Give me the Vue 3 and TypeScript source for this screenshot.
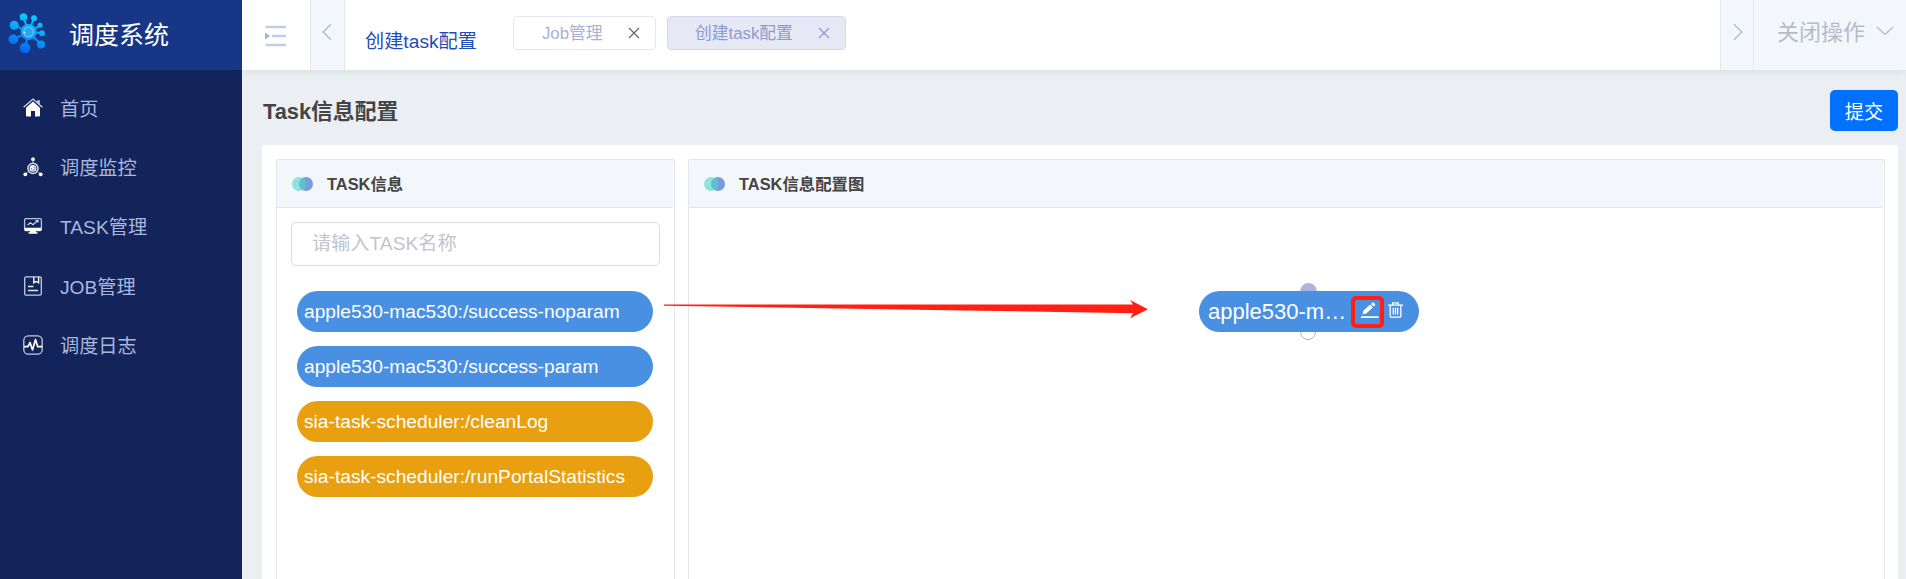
<script setup lang="ts">
interface MenuItem { icon: string; label: string }
interface Tab { label: string; active: boolean }
interface Task { name: string; kind: 'blue' | 'orange' }

const menu: MenuItem[] = [
  { icon: 'home', label: '首页' },
  { icon: 'monitor', label: '调度监控' },
  { icon: 'task', label: 'TASK管理' },
  { icon: 'job', label: 'JOB管理' },
  { icon: 'log', label: '调度日志' },
]
const tabs: Tab[] = [
  { label: 'Job管理', active: false },
  { label: '创建task配置', active: true },
]
const tasks: Task[] = [
  { name: 'apple530-mac530:/success-noparam', kind: 'blue' },
  { name: 'apple530-mac530:/success-param', kind: 'blue' },
  { name: 'sia-task-scheduler:/cleanLog', kind: 'orange' },
  { name: 'sia-task-scheduler:/runPortalStatistics', kind: 'orange' },
]
// Node captions keep only the first ten characters of the task name.
const nodeLabel = tasks[0].name.slice(0, 10) + '…'
</script>

<template>
  <div class="app">
    <aside class="sidebar">
      <div class="brand">
        <svg class="logo" width="38" height="42" viewBox="0 0 38 42">
          <defs>
            <linearGradient id="lg" gradientUnits="userSpaceOnUse" x1="26" y1="2" x2="12" y2="40">
              <stop offset="0" stop-color="#00d4ff" />
              <stop offset="0.45" stop-color="#0aa6fb" />
              <stop offset="1" stop-color="#0560f5" />
            </linearGradient>
          </defs>
          <g stroke="url(#lg)" stroke-width="1.9">
            <path d="M20.5 20 15.5 5M20.5 20 26 6M20.5 20 32.500 13.500M20.500 20 35 21M20.500 20 33 32.500M20.500 20 17 36M20.500 20 5 27.500M20.500 20 6 13" />
          </g>
          <g fill="url(#lg)">
            <circle cx="20.500" cy="20" r="8" />
            <circle cx="15.500" cy="5" r="3.800" />
            <circle cx="26" cy="6.200" r="2.900" />
            <circle cx="32" cy="13.200" r="2.500" />
            <circle cx="34" cy="21.200" r="3" />
            <circle cx="33" cy="32.500" r="4" />
            <circle cx="17" cy="36" r="5.300" />
            <circle cx="5.300" cy="27.400" r="4.800" />
            <circle cx="6.200" cy="13.200" r="4.500" />
          </g>
          <circle cx="20.500" cy="20" r="4.900" fill="#2ba6f5" stroke="#62c8fb" stroke-width="1.200" />
          <circle cx="16.300" cy="20.500" r="1" fill="#c8f0ff" />
        </svg>
        <span class="brand-name">调度系统</span>
      </div>
      <nav class="menu">
        <div v-for="m in menu" :key="m.icon" class="menu-item">
          <svg class="menu-icon" width="20" height="20" viewBox="0 0 20 20" fill="none">
            <template v-if="m.icon === 'home'">
              <path d="M.6 9.200 10 1l9.400 8.200" stroke="#d5daea" stroke-width="1.300" />
              <path d="M14.200 2.200h2.600v4.200l-2.600-2.300z" fill="#d5daea" />
              <path d="M3 9.700 10 3.600l7 6.100V17.500a1 1 0 0 1-1 1h-4V13H8v5.500H4a1 1 0 0 1-1-1z" fill="#fff" />
            </template>
            <template v-else-if="m.icon === 'monitor'">
              <path d="M10 2v5M8 13l-6 4M12 13l6 4" stroke="#8f9bc2" stroke-width="1" />
              <circle cx="10" cy="11.300" r="5.100" stroke="#d8dded" stroke-width="1.500" />
              <circle cx="10" cy="11.300" r="3.400" fill="#fff" />
              <path d="M8.300 10.800a1.900 1.900 0 1 0 2.200-1.400" stroke="#5c6a98" stroke-width=".9" />
              <circle cx="10" cy="2.200" r="2" fill="#e6e9f3" />
              <circle cx="2.300" cy="17.300" r="1.900" fill="#fff" />
              <circle cx="17.700" cy="17.300" r="1.900" fill="#fff" />
            </template>
            <template v-else-if="m.icon === 'task'">
              <rect x="1.600" y="2.600" width="16.800" height="12" rx="1.300" stroke="#b9c1da" stroke-width="1.300" />
              <path d="M1.600 11.800h16.800v1.700a1.500 1.500 0 0 1-1.500 1.500H3.100a1.500 1.500 0 0 1-1.500-1.500zM7 15h6v1.200h1.500v1.500h-9v-1.500H7z" fill="#fff" />
              <path d="m4.500 9 3-2.200 2.500 2 4.500-4M12.500 4.500h2.500v2" stroke="#d5daea" stroke-width="1.200" />
            </template>
            <template v-else-if="m.icon === 'job'">
              <rect x="1.700" y=".8" width="16.600" height="18.400" rx="1.500" stroke="#c5cce0" stroke-width="1.300" />
              <path d="M10.800 1v5.800l2.400-1.300 2.400 1.300V1" stroke="#fff" stroke-width="1.400" />
              <path d="M5 10.500h5.500M5 14.500h10" stroke="#e4e8f2" stroke-width="1.400" />
            </template>
            <template v-else>
              <rect x=".8" y=".8" width="18.400" height="18.400" rx="4.500" stroke="#c5cce0" stroke-width="1.300" />
              <path d="M1 11.700h4l2-4.200 2.500 7.500 3-10.500 2.200 7.200H19" stroke="#fff" stroke-width="1.700" stroke-linejoin="round" />
            </template>
          </svg>
          <span>{{ m.label }}</span>
        </div>
      </nav>
    </aside>

    <div class="main">
      <header class="topbar">
        <div class="fold">
          <svg width="22" height="22" viewBox="0 0 22 22">
            <path d="M.5 2h20.500M7 11h14M.5 20h20.500" stroke="#c3cce5" stroke-width="2.400" />
            <path d="M0 7.500 5 11l-5 3.500z" fill="#a3b0da" />
          </svg>
        </div>
        <div class="scroll-btn left">
          <svg width="10" height="18" viewBox="0 0 10 18"><path d="M9 1.200 1.200 9 9 16.800" fill="none" stroke="#b4bccb" stroke-width="1.500" /></svg>
        </div>
        <div class="crumb">创建task配置</div>
        <div class="tabs">
          <div v-for="t in tabs" :key="t.label" class="tab" :class="{ active: t.active }">
            <span>{{ t.label }}</span>
            <svg width="12" height="12" viewBox="0 0 12 12"><path d="m1 1 10 10M11 1 1 11" stroke="currentColor" stroke-width="1.200" /></svg>
          </div>
        </div>
        <div class="scroll-btn right">
          <svg width="10" height="18" viewBox="0 0 10 18"><path d="m1 1.200 7.800 7.800L1 16.800" fill="none" stroke="#b4bccb" stroke-width="1.500" /></svg>
        </div>
        <div class="close-op">
          <span>关闭操作</span>
          <svg width="18" height="10" viewBox="0 0 18 10"><path d="m1 1 8 7.500L17 1" fill="none" stroke="#b9c1d0" stroke-width="1.500" /></svg>
        </div>
      </header>

      <section class="content">
        <div class="title-row">
          <h1>Task信息配置</h1>
          <button class="submit">提交</button>
        </div>
        <div class="board">
          <div class="card list-card">
            <div class="card-head">
              <svg width="21" height="14" viewBox="0 0 21 14">
                <circle cx="14" cy="7" r="7" fill="#759edb" /><circle cx="7" cy="7" r="7" fill="#8fe3dc" />
                <path d="M10.500 .9a7 7 0 0 1 0 12.200a7 7 0 0 1 0-12.200z" fill="#5fc1cc" />
              </svg>
              <span>TASK信息</span>
            </div>
            <div class="list-body">
              <input class="search" type="text" placeholder="请输入TASK名称" />
              <div class="pills">
                <div v-for="t in tasks" :key="t.name" class="pill" :class="t.kind">{{ t.name }}</div>
              </div>
            </div>
          </div>
          <div class="card graph-card">
            <div class="card-head">
              <svg width="21" height="14" viewBox="0 0 21 14">
                <circle cx="14" cy="7" r="7" fill="#759edb" /><circle cx="7" cy="7" r="7" fill="#8fe3dc" />
                <path d="M10.500 .9a7 7 0 0 1 0 12.200a7 7 0 0 1 0-12.200z" fill="#5fc1cc" />
              </svg>
              <span>TASK信息配置图</span>
            </div>
            <div class="canvas">
              <svg class="arrow" width="486" height="20" viewBox="0 0 486 20">
                <path d="M1 4.400 470 4.400 467 0 485 9.300 467 18.300 470 13.200 300 10.500 1 5.800z" fill="#ff2013" />
              </svg>
              <div class="node">
                <i class="port in"></i>
                <i class="port out"></i>
                <div class="node-body">
                  <span class="node-text">{{ nodeLabel }}</span>
                  <svg class="edit" width="18" height="17" viewBox="0 0 18 17" fill="#fff">
                    <path d="M0 14.300h17.500v1.800H0zM1.500 12.300l1-3.800L9.200 2.600l2.600 2.900-6.600 6zM10 1.900 11.500.5q.6-.4 1.100.1l1.400 1.500q.4.600 0 1.100l-1.400 1.400z" />
                  </svg>
                  <svg class="trash" width="15" height="16" viewBox="0 0 15 16" fill="none" stroke="#fff" stroke-width="1.300">
                    <path d="M0 3.200h15M4.700 3V.8h5.600V3M2.200 3.200v10.700q0 1.200 1.200 1.200h8.200q1.200 0 1.200-1.200V3.200M5.300 5.800v6.800M7.500 5.800v6.800M9.700 5.800v6.800" />
                  </svg>
                </div>
                <i class="mark"></i>
              </div>
            </div>
          </div>
        </div>
      </section>
    </div>
  </div>
</template>

<style>
html, body { margin: 0; overflow: hidden; }
</style>

<style scoped>
* { box-sizing: border-box; }
.app {
  display: flex; width: 100%; height: 579px; overflow: hidden;
  font-family: "Liberation Sans", "Noto Sans CJK SC", sans-serif;
  font-size: 19.2px; background: #ebeff4;
}
.sidebar { flex: 0 0 242px; background: #122459; }
.brand { display: flex; align-items: center; height: 70px; padding-left: 8px; background: #183686; }
.logo { margin-top: -4px; }
.brand-name { margin-left: 23px; margin-top: -1px; font-size: 25px; color: #fff; line-height: 36px; }
.menu { padding-top: 10px; }
.menu-item { display: flex; align-items: center; height: 59.200px; padding-left: 23px; color: #a9b7df; line-height: 28px; }
.menu-item span { margin-left: 17px; margin-top: 1px; }
.menu-icon { margin-top: -3px; }

.main { flex: 1; min-width: 0; display: flex; flex-direction: column; }
.topbar { position: relative; display: flex; flex: 0 0 70px; background: #fff; box-shadow: 0 2px 8px rgba(60, 80, 90, .1); }
.fold { width: 68px; padding: 25px 0 0 23px; }
.scroll-btn { width: 35px; padding: 23px 0 0 11px; background: #f3f7fb; border: solid #e3e7f1; border-width: 0 1px; }
.scroll-btn.right { width: 34px; padding-left: 12px; }
.crumb { padding-left: 20px; line-height: 28px; padding-top: 28px; color: #1f4cb8; }
.tabs { flex: 1; display: flex; gap: 11px; padding: 16px 0 0 36px; }
.tab {
  display: flex; align-items: center; justify-content: space-between; width: 143px; height: 34px;
  padding: 0 15px 0 28px; border: 1px solid #e3e6f3; border-radius: 4px; font-size: 16.800px; color: #a6b1d9;
}
.tab span { line-height: 20px; margin-top: 2px; }
.tab svg { color: #666; }
.tab.active { width: 179px; padding-left: 27px; background: #e6e9f5; border-color: #d3d9ec; color: #8b9ad0; }
.tab.active svg { color: #8b9ad0; }
.close-op { display: flex; align-items: center; width: 152px; padding: 0 0 8px 23px; background: #f3f7fb; font-size: 22px; color: #b5bbcb; }
.close-op span { margin-top: -2px; }
.close-op svg { margin-left: 11px; }

.content { flex: 1; display: flex; flex-direction: column; padding: 20px 8px 0 20px; }
.title-row { display: flex; justify-content: space-between; height: 55px; }
h1 { margin: 0; padding-left: 1px; font-size: 21.800px; line-height: 44px; color: #444; }
.submit { width: 68px; height: 41px; padding: 4px 0 0; border: 0; border-radius: 5px; background: #0070ff; color: #fff; font: inherit; line-height: 37px; }
.board { flex: 1; display: flex; gap: 13px; padding: 14px 13px 0 14px; background: #fff; }
.card { border: solid #e4e7ea; border-width: 1px 1px 0; border-radius: 3px 3px 0 0; }
.list-card { width: 399px; }
.graph-card { flex: 1; min-width: 0; }
.card-head { display: flex; align-items: center; height: 48px; margin-right: 1px; padding-left: 15px; background: #f3f7fb; border-bottom: 1px solid #e4e7ea; font-size: 16.400px; font-weight: bold; color: #444; }
.card-head span { margin-left: 14px; margin-top: -1px; }
.list-body { padding: 14px 14px 0; }
.search {
  display: block; width: 369px; height: 44px; padding: 0 20px; border: 1px solid #d9dce6; border-radius: 5px;
  font: inherit; background: #fff;
}
.search::placeholder { color: #bfc4ce; opacity: 1; }
.pills { display: flex; flex-direction: column; gap: 14px; padding: 25px 6px 0; }
.pill { width: 356px; height: 41px; padding-left: 7px; border-radius: 20.500px; color: #fff; line-height: 41px; white-space: nowrap; }
.blue { background: #4a90e2; }
.orange { background: #e8a010; }

.canvas { position: relative; height: 372px; }
.arrow { position: absolute; left: -26px; top: 92px; }
.node { position: absolute; left: 510px; top: 83px; width: 220px; height: 41px; }
.node-body { position: relative; display: flex; align-items: center; height: 41px; padding-left: 9px; border-radius: 20.500px; background: #4a90e2; color: #fff; }
.node-text { width: 139px; white-space: nowrap; font-size: 22px; line-height: 41px; }
.edit { margin-left: 14px; margin-top: -2px; }
.trash { margin-left: 9px; margin-top: -4px; }
.port { position: absolute; left: 101px; width: 17px; height: 17px; border-radius: 50%; }
.port.in { top: -8px; background: #aab4dc; }
.port.out { bottom: -8px; width: 16px; height: 16px; border: 1px solid #aab4dc; background: #fff; }
.mark { position: absolute; left: 152px; top: 5px; width: 33px; height: 32px; border: 4px solid #ff2013; border-radius: 5px; }
</style>
